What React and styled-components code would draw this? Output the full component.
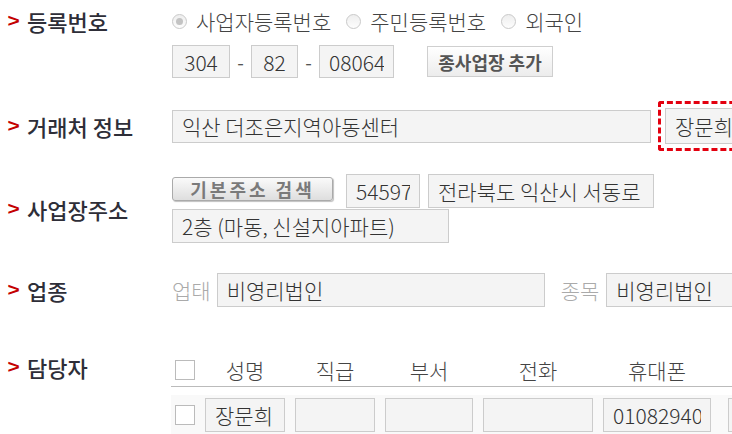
import React from 'react';
import styled, { createGlobalStyle } from 'styled-components';

const Global = createGlobalStyle`
  html, body { margin: 0; padding: 0; background: #fff; }
  body {
    font-family: "Noto Sans CJK KR", "Noto Sans", sans-serif;
    width: 732px; height: 434px; overflow: hidden;
  }
`;

const Form = styled.div`
  display: flex;
  flex-direction: column;
  width: 732px;
  overflow: hidden;
`;

const Row = styled.div`
  display: grid;
  grid-template-columns: 172px 1fr;
  align-items: ${p => p.$align || 'start'};
  margin-top: ${p => p.$top}px;
`;

const Label = styled.div`
  display: flex;
  align-items: center;
  gap: 8px;
  padding-left: 8px;
  height: ${p => p.$h || 26}px;
  font-size: 22px;
  font-weight: 500;
  color: #2e2e38;
  white-space: nowrap;
`;

const Mark = styled.span`
  font-family: "Liberation Sans", Arial, sans-serif;
  color: #c40000;
  font-size: 19px;
  font-weight: 900;
  transform: scaleX(1.1);
`;

const Content = styled.div`
  display: flex;
  flex-direction: column;
  gap: ${p => p.$gap || 0}px;
  min-width: 0;
`;

const Line = styled.div`
  display: flex;
  align-items: center;
  white-space: nowrap;
`;

const RadioItem = styled.label`
  display: flex;
  align-items: center;
  gap: 9px;
  height: 26px;
  margin-right: 15px;
  font-size: 21px;
  font-weight: 300;
  color: #444;
`;

const RadioDot = styled.span`
  width: 15px;
  height: 15px;
  box-sizing: border-box;
  border-radius: 50%;
  border: 1px solid #c9c9c9;
  background: linear-gradient(#eeeeee, #fdfdfd);
  display: flex;
  align-items: center;
  justify-content: center;
  &::after {
    content: '';
    width: 7px;
    height: 7px;
    border-radius: 50%;
    background: ${p => (p.$on ? '#c3c3c3' : 'transparent')};
  }
`;

const Field = styled.input`
  box-sizing: border-box;
  width: ${p => p.$w}px;
  height: ${p => p.$h || 34}px;
  flex: none;
  margin: 0;
  padding: 0 9px;
  border: 1px solid #cccccc;
  background: #f4f4f4;
  font-family: "Noto Sans CJK KR", "Noto Sans", sans-serif;
  font-size: 21px;
  font-weight: 300;
  color: #333;
  text-align: ${p => (p.$center ? 'center' : 'left')};
  outline: none;
  margin-left: ${p => p.$ml || 0}px;
`;

const Dash = styled.span`
  width: 21px;
  text-align: center;
  font-size: 19px;
  color: #555;
`;

const AddButton = styled.button`
  margin-left: 33px;
  width: 126px;
  height: 31px;
  border: 1px solid #cfcfcf;
  background: linear-gradient(#ffffff, #ececec);
  font-family: "Noto Sans CJK KR", sans-serif;
  font-size: 18px;
  font-weight: 700;
  color: #555;
  padding: 0;
`;

const SearchButton = styled.button`
  width: 161px;
  height: 24px;
  margin-right: 13px;
  margin-top: -5px;
  border: 1px solid #aaa;
  border-radius: 3px;
  box-shadow: 1px 1px 1px rgba(0, 0, 0, 0.25);
  background: linear-gradient(#fafafa, #dedede);
  font-family: "Noto Sans CJK KR", sans-serif;
  font-size: 18px;
  font-weight: 700;
  letter-spacing: 3px;
  color: #7a7a7a;
  padding: 0;
  line-height: 1;
`;

const Highlight = styled.div`
  margin-left: 7px;
  padding: 4px;
  border: 3px dashed #e3000f;
  border-radius: 3px;
  flex: none;
`;

const Caption = styled.span`
  font-size: 21px;
  font-weight: 300;
  color: #aaa;
  margin-left: ${p => p.$ml || 0}px;
  margin-right: ${p => p.$mr || 0}px;
`;

const COLS = '20px 80px 80px 88px 110px 108px 130px';

const TableHead = styled.div`
  display: grid;
  grid-template-columns: ${COLS};
  column-gap: 10px;
  align-items: center;
  padding: 0 0 7px 4px;
  height: 24px;
  border-bottom: 1px solid #bbbbbb;
  margin-left: -1px;
`;

const TableRow = styled.div`
  display: grid;
  grid-template-columns: ${COLS};
  column-gap: 10px;
  align-items: center;
  margin-top: 8px;
  margin-left: -1px;
  padding: 3px 0 3px 4px;
  background: #f9f9f9;
`;

const Head = styled.span`
  text-align: center;
  font-size: 21px;
  font-weight: 300;
  color: #444;
`;

const Check = styled.span`
  width: 20px;
  height: 20px;
  box-sizing: border-box;
  border: 1px solid #bbb;
  background: #fff;
`;

const LastCell = styled.div`
  margin-left: 7px;
`;

export default function App() {
  return (
    <>
      <Global />
      <Form>
        <Row $top={8}>
          <Label><Mark>&gt;</Mark>등록번호</Label>
          <Content $gap={11}>
            <Line>
              <RadioItem><RadioDot $on />사업자등록번호</RadioItem>
              <RadioItem><RadioDot />주민등록번호</RadioItem>
              <RadioItem><RadioDot />외국인</RadioItem>
            </Line>
            <Line>
              <Field $w={58} $h={33} $center readOnly value="304" />
              <Dash>-</Dash>
              <Field $w={47} $h={33} $center readOnly value="82" />
              <Dash>-</Dash>
              <Field $w={75} $h={33} $center readOnly value="08064" />
              <AddButton>종사업장 추가</AddButton>
            </Line>
          </Content>
        </Row>

        <Row $top={23} $align="center">
          <Label><Mark>&gt;</Mark>거래처 정보</Label>
          <Line>
            <Field $w={479} $h={33} readOnly value="익산 더조은지역아동센터" />
            <Highlight>
              <Field $w={90} $h={36} readOnly value="장문희" />
            </Highlight>
          </Line>
        </Row>

        <Row $top={23} $align="center">
          <Label><Mark>&gt;</Mark>사업장주소</Label>
          <Content $gap={1}>
            <Line>
              <SearchButton>기본주소 검색</SearchButton>
              <Field $w={74} readOnly value="54597" />
              <Field $w={226} $ml={8} readOnly value="전라북도 익산시 서동로" />
            </Line>
            <Line>
              <Field $w={277} readOnly value="2층 (마동, 신설지아파트)" />
            </Line>
          </Content>
        </Row>

        <Row $top={30} $align="center">
          <Label><Mark>&gt;</Mark>업종</Label>
          <Line>
            <Caption $mr={6}>업태</Caption>
            <Field $w={328} readOnly value="비영리법인" />
            <Caption $ml={16} $mr={7}>종목</Caption>
            <Field $w={328} readOnly value="비영리법인" />
          </Line>
        </Row>

        <Row $top={48}>
          <Label $h={24}><Mark>&gt;</Mark>담당자</Label>
          <Content>
            <TableHead>
              <Check />
              <Head>성명</Head>
              <Head>직급</Head>
              <Head>부서</Head>
              <Head>전화</Head>
              <Head>휴대폰</Head>
              <Head />
            </TableHead>
            <TableRow>
              <Check />
              <Field $w={80} readOnly value="장문희" />
              <Field $w={80} readOnly value="" />
              <Field $w={88} readOnly value="" />
              <Field $w={110} readOnly value="" />
              <Field $w={108} readOnly value="01082940457" />
              <LastCell><Field $w={110} readOnly value="" /></LastCell>
            </TableRow>
          </Content>
        </Row>
      </Form>
    </>
  );
}
